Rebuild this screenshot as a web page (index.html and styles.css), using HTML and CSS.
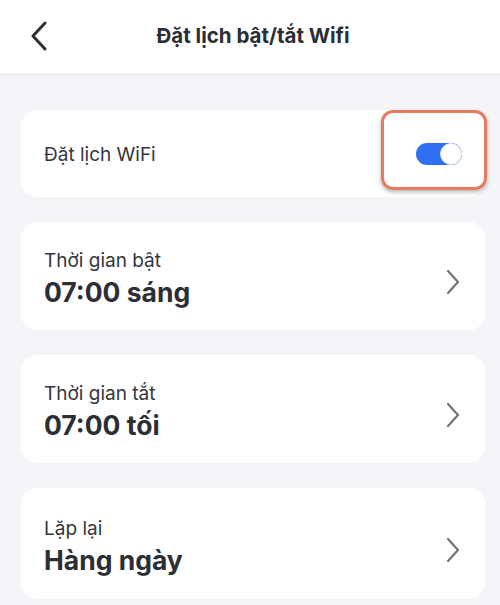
FILE: index.html
```html
<!DOCTYPE html>
<html lang="vi">
<head>
<meta charset="utf-8">
<link rel="stylesheet" href="styles.css">
</head>
<body>
<header class="topbar">
  <button class="back" aria-label="Quay lại">
    <svg width="18" height="30" viewBox="0 0 18 30"><path d="M15 2 L3 15 L15 28" fill="none" stroke="#2d3036" stroke-width="3" stroke-linecap="round" stroke-linejoin="round"/></svg>
  </button>
  <h1 class="title">Đặt lịch bật/tắt Wifi</h1>
</header>
<main class="content">
  <section class="card card-switch">
    <span class="label-lg">Đặt lịch WiFi</span>
    <span class="toggle"><span class="knob"></span></span>
    <span class="highlight"></span>
  </section>
  <section class="card card-row">
    <div class="texts">
      <span class="label">Thời gian bật</span>
      <span class="value">07:00 sáng</span>
    </div>
    <svg class="chev" width="14" height="26" viewBox="0 0 14 26"><path d="M2 2 L12 13 L2 24" fill="none" stroke="#707379" stroke-width="2.2" stroke-linecap="round" stroke-linejoin="round"/></svg>
  </section>
  <section class="card card-row">
    <div class="texts">
      <span class="label">Thời gian tắt</span>
      <span class="value">07:00 tối</span>
    </div>
    <svg class="chev" width="14" height="26" viewBox="0 0 14 26"><path d="M2 2 L12 13 L2 24" fill="none" stroke="#707379" stroke-width="2.2" stroke-linecap="round" stroke-linejoin="round"/></svg>
  </section>
  <section class="card card-row tall">
    <div class="texts">
      <span class="label">Lặp lại</span>
      <span class="value">Hàng ngày</span>
    </div>
    <svg class="chev" width="14" height="26" viewBox="0 0 14 26"><path d="M2 2 L12 13 L2 24" fill="none" stroke="#707379" stroke-width="2.2" stroke-linecap="round" stroke-linejoin="round"/></svg>
  </section>
</main>
</body>
</html>
```
FILE: styles.css
```css
* { box-sizing: border-box; }
html, body { margin: 0; padding: 0; }
body {
  width: 500px;
  height: 605px;
  overflow: hidden;
  background: #f4f5f9;
  font-family: Inter, "Noto Sans", sans-serif;
  color: #2d3037;
}
.topbar {
  height: 75px;
  background: #ffffff;
  border-bottom: 1px solid #e4e8ee;
  display: flex;
  align-items: center;
  justify-content: center;
  position: relative;
}
.back {
  position: absolute;
  left: 30px;
  top: 21px;
  border: 0;
  background: none;
  padding: 0;
  width: 18px;
  height: 30px;
}
.title {
  margin: 0 0 4px 6px;
  font-size: 20.5px;
  font-weight: 700;
  color: #2b2e34;
}
.content {
  padding: 35px 15px 0 21px;
  display: flex;
  flex-direction: column;
  gap: 25px;
}
.card {
  background: #ffffff;
  border-radius: 16px;
  position: relative;
  display: flex;
  align-items: center;
}
.card-switch {
  height: 87px;
  padding: 0 23px;
  justify-content: space-between;
}
.label-lg {
  font-size: 19px;
  color: #33363c;
  margin-top: 2px;
}
.toggle {
  width: 46px;
  height: 22px;
  border-radius: 11px;
  background: #2f6ff0;
  position: relative;
  margin-top: 1px;
}
.knob {
  position: absolute;
  right: 0;
  top: 0;
  width: 22px;
  height: 22px;
  border-radius: 50%;
  background: #ffffff;
  border: 1px solid #e6e8ec;
}
.highlight {
  position: absolute;
  left: 360px;
  top: 0;
  width: 106px;
  height: 80px;
  border: 3px solid #e67b5e;
  border-radius: 12px;
  box-shadow: 0 2px 4px rgba(0,0,0,0.3);
}
.card-row {
  height: 108px;
  padding: 0 25px 0 23px;
  justify-content: space-between;
}
.card-row.tall { height: 111px; }
.texts {
  display: flex;
  flex-direction: column;
  gap: 2px;
  padding-top: 6px;
}
.label {
  font-size: 19px;
  color: #33363c;
  line-height: 24px;
}
.value {
  font-size: 26.5px;
  font-weight: 700;
  color: #2b2e35;
  line-height: 34px;
}
.chev { margin-top: 12px; }
```
